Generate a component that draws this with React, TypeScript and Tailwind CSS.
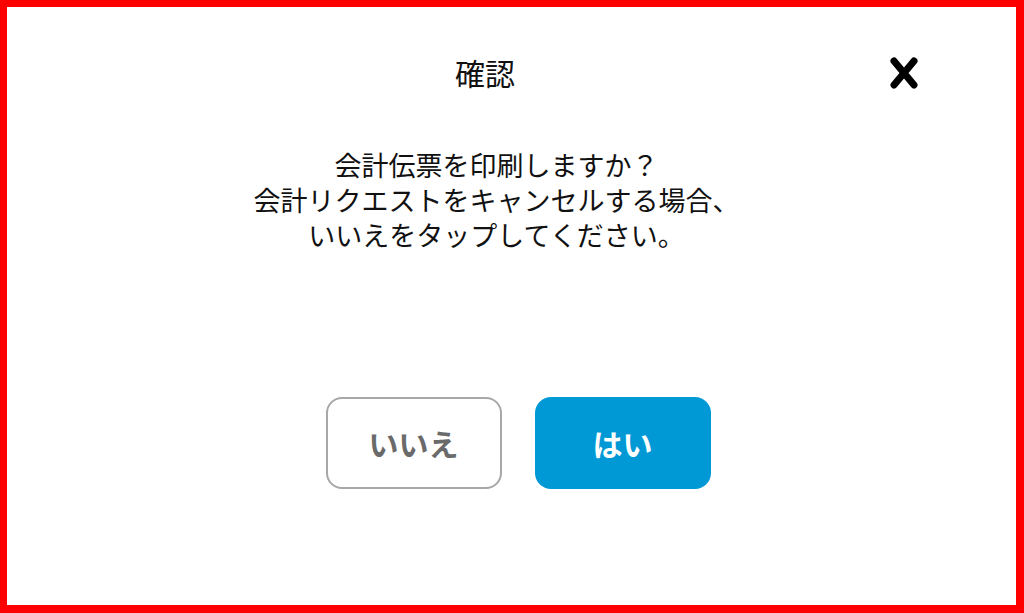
import React from "react";

const jp = { fontFamily: '"Noto Sans CJK JP", "Noto Sans", sans-serif' };

function CloseIcon() {
  return (
    <svg width="28" height="32" viewBox="0 0 28 32" aria-hidden="true">
      <path d="M4 4 L24 28 M24 4 L4 28" stroke="#000" strokeWidth="7" strokeLinecap="round" fill="none" />
    </svg>
  );
}

export default function App() {
  return (
    <div
      className="w-[1024px] h-[613px] bg-white border-solid border-[#ff0000] border-t-[7px] border-l-[7px] border-r-[8px] border-b-[8px] flex flex-col"
      style={jp}
    >
      <div className="flex items-center pt-[50px] h-[80px]">
        <div className="w-[448px]" />
        <h1 className="text-[30px] leading-[30px] text-[#111] font-normal">確認</h1>
        <div className="flex-1" />
        <button className="mr-[98px] mt-[2px] flex items-center justify-center">
          <CloseIcon />
        </button>
      </div>

      <div className="mt-[60px] pr-[30px] text-center text-[27px] leading-[35px] text-[#111]">
        <p>
          会計伝票を印刷しますか？
          <br />
          会計リクエストをキャンセルする場合、
          <br />
          いいえをタップしてください。
        </p>
      </div>

      <div className="mt-[145px] pl-[13px] flex justify-center gap-[33px]">
        <button className="w-[176px] h-[92px] rounded-[16px] border-2 border-[#a8a8a8] bg-white text-[#6a6a6a] text-[30px] font-bold flex items-center justify-center">
          いいえ
        </button>
        <button className="w-[176px] h-[92px] rounded-[16px] bg-[#0099d5] text-white text-[30px] font-bold flex items-center justify-center">
          はい
        </button>
      </div>
    </div>
  );
}
